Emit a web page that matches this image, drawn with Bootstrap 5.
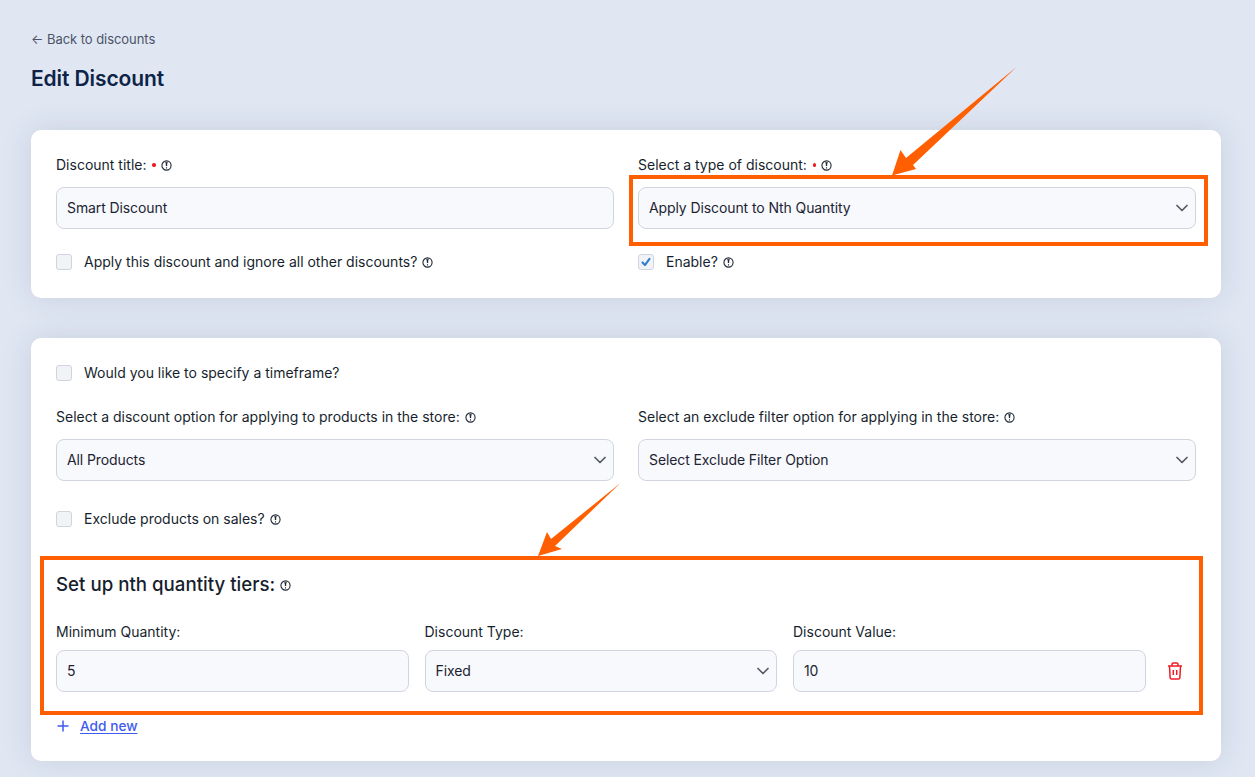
<!DOCTYPE html>
<html lang="en">
<head>
<meta charset="utf-8">
<title>Edit Discount</title>
<link href="https://cdn.jsdelivr.net/npm/bootstrap@5.3.0/dist/css/bootstrap.min.css" rel="stylesheet">
<style>
html,body{height:777px;overflow:hidden}
body{background:#e0e7f3;font-family:Inter,"Liberation Sans",sans-serif;font-size:14px;color:#171f2e}
.page-wrap{position:relative;padding:31px 34px 16px 31px;height:777px}
.back-link{display:block;font-size:13px;line-height:16px;color:#4b5468;text-decoration:none;letter-spacing:-.05px;margin-left:0}
.page-title{font-size:21px;line-height:28px;font-weight:600;color:#0d2348;margin:18px 0 37px;letter-spacing:-.1px}
.panel{border:0;border-radius:10px;background:#fff;box-shadow:0 0 30px rgba(30,50,90,.13)}
.panel .card-body{padding:25px 25px 0}
.panel-a{height:168px;margin-bottom:40px}
.panel-b{height:423px}
.gap-cols{--bs-gutter-x:24px;--bs-gutter-y:0}
.tier-cols{display:flex;gap:16px;align-items:flex-end}
.tier-cols>div{width:352.5px}
.fld-label{display:flex;align-items:center;gap:5px;font-size:14px;line-height:20px;margin:0 0 12px;color:#171f2e}
.tier-cols .fld-label{margin-bottom:8px}
.req{width:3.5px;height:3.5px;border-radius:50%;background:#ee1c25;margin-left:1px}
.tip{width:11px;height:11px;flex:none;display:block}
.form-control.fld,.form-select.fld{height:42px;border-radius:8px;border:1px solid #cfd4de;background-color:#f8f9fc;font-size:14px;color:#1c2433;padding:0 10px 2px;letter-spacing:-.1px;box-shadow:none}
.form-select.fld{padding-right:30px;background-image:url("data:image/svg+xml,%3csvg xmlns='http://www.w3.org/2000/svg' viewBox='0 0 12 8'%3e%3cpath fill='none' stroke='%23555b66' stroke-linecap='round' stroke-linejoin='round' stroke-width='1.7' d='M1 1.500l5 5 5-5'/%3e%3c/svg%3e");background-position:right 7px center;background-size:12px 8px}
.chk-row{display:flex;align-items:center;min-height:20px;padding:0;margin:0;gap:12px}
.chk-row .form-check-input{float:none;margin:0;width:16px;height:16px;flex:none;background-color:#f1f3f7;border:1px solid #cfd4de;border-radius:3px}
.chk-row .form-check-input:checked{background-color:#f1f3f7;border-color:#cfd4de;background-image:url("data:image/svg+xml,%3csvg xmlns='http://www.w3.org/2000/svg' viewBox='0 0 16 16'%3e%3cpath fill='none' stroke='%232f7fd1' stroke-linecap='round' stroke-linejoin='round' stroke-width='2.4' d='M4 8.5l2.8 3L12 4.5'/%3e%3c/svg%3e")}
.chk-row .form-check-label{display:flex;align-items:center;gap:5px;line-height:20px}
.tier-title{display:flex;align-items:center;gap:5px;font-size:18.7px;line-height:24px;font-weight:500;color:#171f2e;margin:0 0 25px}
.trash{width:30px;display:flex;justify-content:center;align-items:center;height:42px;margin-left:-2px;flex:none}
.add-row{display:flex;align-items:center;gap:10px;line-height:20px}
.add-row a{color:#3f5bf0;font-weight:500;font-size:13.7px;text-underline-offset:2px}
.note-box{position:absolute;border:4px solid #ff5f00;pointer-events:none}
.note-one{left:629px;top:175px;width:579px;height:71px}
.note-two{left:40px;top:556px;width:1163px;height:159px}
.note-arrows{position:absolute;left:0;top:0;width:1255px;height:777px;pointer-events:none}
.mt-gapa{margin-top:23px}
.mt-b1{margin-top:24px}
.mt-b2{margin-top:28px}
.mt-b3{margin-top:44px}
.mt-b4{margin-top:24px}
</style>
</head>
<body>
<svg width="0" height="0" class="position-absolute">
  <symbol id="tip" viewBox="0 0 12 12"><circle cx="6" cy="6" r="5" fill="none" stroke="#1f2735" stroke-width="1.2"/><path d="M6 3v3.6" stroke="#1f2735" stroke-width="1.5" fill="none"/><path d="M4.6 3h2.8M6 8v1.3" stroke="#1f2735" stroke-width="1.2" fill="none"/></symbol>
</svg>
<div class="page-wrap">
  <a class="back-link" href="#">← Back to discounts</a>
  <h1 class="page-title">Edit Discount</h1>

  <div class="card panel panel-a">
    <div class="card-body">
      <div class="row gap-cols">
        <div class="col-6">
          <label class="fld-label">Discount title: <span class="req"></span><svg class="tip"><use href="#tip"/></svg></label>
          <input class="form-control fld" type="text" value="Smart Discount">
          <div class="form-check chk-row mt-gapa"><input class="form-check-input" type="checkbox" id="c1"><label class="form-check-label" for="c1">Apply this discount and ignore all other discounts? <svg class="tip"><use href="#tip"/></svg></label></div>
        </div>
        <div class="col-6">
          <label class="fld-label">Select a type of discount: <span class="req"></span><svg class="tip"><use href="#tip"/></svg></label>
          <select class="form-select fld"><option>Apply Discount to Nth Quantity</option></select>
          <div class="form-check chk-row mt-gapa"><input class="form-check-input" type="checkbox" id="c2" checked><label class="form-check-label" for="c2">Enable? <svg class="tip"><use href="#tip"/></svg></label></div>
        </div>
      </div>
    </div>
  </div>

  <div class="card panel panel-b">
    <div class="card-body">
      <div class="form-check chk-row"><input class="form-check-input" type="checkbox" id="c3"><label class="form-check-label" for="c3">Would you like to specify a timeframe?</label></div>
      <div class="row gap-cols mt-b1">
        <div class="col-6">
          <label class="fld-label">Select a discount option for applying to products in the store: <svg class="tip"><use href="#tip"/></svg></label>
          <select class="form-select fld"><option>All Products</option></select>
        </div>
        <div class="col-6">
          <label class="fld-label">Select an exclude filter option for applying in the store: <svg class="tip"><use href="#tip"/></svg></label>
          <select class="form-select fld"><option>Select Exclude Filter Option</option></select>
        </div>
      </div>
      <div class="form-check chk-row mt-b2"><input class="form-check-input" type="checkbox" id="c4"><label class="form-check-label" for="c4">Exclude products on sales? <svg class="tip"><use href="#tip"/></svg></label></div>
      <h2 class="tier-title mt-b3">Set up nth quantity tiers: <svg class="tip"><use href="#tip"/></svg></h2>
      <div class="tier-cols">
        <div><label class="fld-label">Minimum Quantity:</label><input class="form-control fld" type="text" value="5"></div>
        <div><label class="fld-label">Discount Type:</label><select class="form-select fld"><option>Fixed</option></select></div>
        <div><label class="fld-label">Discount Value:</label><input class="form-control fld" type="text" value="10"></div>
        <span class="trash"><svg width="16" height="18" viewBox="0 0 16 18" fill="none" stroke="#ee1c25" stroke-width="1.5" stroke-linejoin="round"><path d="M1 4h14M5 4V2.2C5 1.5 5.5 1 6.2 1h3.6c.7 0 1.2.5 1.2 1.2V4"/><path d="M2.5 4l.6 11.4c0 .9.7 1.6 1.6 1.6h6.6c.9 0 1.6-.7 1.6-1.6L13.500 4"/><path d="M6.300 8v5M9.700 8v5"/></svg></span>
      </div>
      <div class="add-row mt-b4">
        <svg width="14" height="14" viewBox="0 0 14 14" stroke="#3f5bf0" stroke-width="1.500" fill="none"><path d="M7 1.500v11M1.500 7h11"/></svg>
        <a href="#">Add new</a>
      </div>
    </div>
  </div>

  <div class="note-box note-one"></div>
  <div class="note-box note-two"></div>
  <svg class="note-arrows" viewBox="0 0 1255 777">
    <polygon fill="#ff5f00" points="1016.5,67 906,158 900.500,150 892,175.500 916,169 913,165"/>
    <polygon fill="#ff5f00" points="620.500,483 551,539 547,532 538,556 562,549 555,546"/>
  </svg>
</div>
<script src="https://cdn.jsdelivr.net/npm/bootstrap@5.3.0/dist/js/bootstrap.bundle.min.js"></script>
</body>
</html>
